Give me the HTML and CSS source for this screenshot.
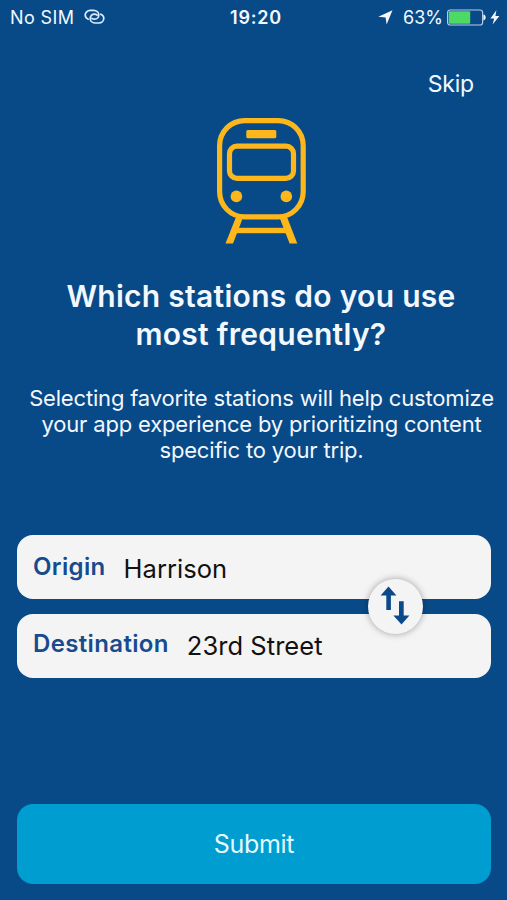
FILE: index.html
```html
<!DOCTYPE html>
<html lang="en">
<head>
  <meta charset="UTF-8" />
  <meta name="viewport" content="width=device-width, initial-scale=1.0" />
  <title>Favorite Stations</title>
  <link rel="stylesheet" href="styles.css">
</head>
<body>
  <div class="status-bar">
    <div class="status-left">
      <span class="carrier">No SIM</span>
      <svg class="link-icon" width="22" height="18" viewBox="0 0 22 18">
        <path d="M4.2 11.2C2.2 10.4 1.2 8.8 1.2 7.1C1.2 4.5 3.4 2.4 6.2 2.4H9.6C12.4 2.4 14.8 4.4 14.8 7C14.8 9.4 13 11.2 10.6 11.2C9.4 11.2 8.6 10.9 7.9 10.3" />
        <path d="M16.8 6.2C18.8 7 19.8 8.6 19.8 10.3C19.8 12.9 17.6 15 14.8 15H11.4C8.6 15 6.2 13 6.2 10.4C6.2 8 8 6.2 10.4 6.2C11.6 6.2 12.4 6.5 13.1 7.1" />
      </svg>
    </div>
    <span class="time">19:20</span>
    <div class="status-right">
      <svg class="location-icon" width="15" height="15" viewBox="0 0 15 15">
        <path d="M14.5 0.3L8.6 14.4L7.6 7.5L0.3 6.7Z" />
      </svg>
      <span class="percent">63%</span>
      <svg class="battery-icon" width="40" height="17" viewBox="0 0 40 17">
        <rect class="battery-shell" x="0.6" y="1" width="35" height="15" rx="2.5" />
        <rect class="battery-level" x="1.8" y="2.2" width="21.4" height="12.6" rx="1" />
        <path class="battery-cap" d="M36.4 5.6C39.4 6 39.4 11 36.4 11.4Z" />
      </svg>
      <svg class="bolt-icon" width="10" height="15" viewBox="0 0 10 15">
        <path d="M6.4 0.3L0.4 8.5H4.2L2.6 14.6L9.4 6.1H5.4Z" />
      </svg>
    </div>
  </div>

  <header>
    <a href="#" class="skip">Skip</a>
  </header>

  <section class="intro">
    <svg class="train" width="90" height="128" viewBox="216 117 90 128">
      <rect class="line" x="219.6" y="120.6" width="83.6" height="96.2" rx="25" />
      <rect class="line" x="229.5" y="146.2" width="64" height="32.2" rx="7.5" />
      <rect x="246.3" y="130" width="30" height="8.3" rx="1.5" />
      <circle cx="236.4" cy="196.4" r="5.8" />
      <circle cx="286.3" cy="196.4" r="5.8" />
      <path d="M235.8 217.5H243L233 243.4H225.5Z" />
      <path d="M279.5 217.5H287.2L297.3 243.4H289.6Z" />
      <rect x="236" y="227.8" width="51" height="5.4" />
    </svg>
    <h1>Which stations do you use<br>most frequently?</h1>
    <p>Selecting favorite stations will help customize<br>your app experience by prioritizing content<br>specific to your trip.</p>
  </section>

  <section class="stations">
    <div class="field">
      <span class="label">Origin</span>
      <span class="value">Harrison</span>
    </div>
    <div class="field destination">
      <span class="label">Destination</span>
      <span class="value">23rd Street</span>
    </div>
    <button class="swap" aria-label="Swap stations">
      <svg width="30" height="40" viewBox="0 0 30 40">
        <path d="M8.5 0.6L16.4 9.6H10.9V24H6.3V9.6H0.6Z" />
        <path d="M21.5 38.6L13.4 29.6H19V15.2H23.7V29.6H29.4Z" />
      </svg>
    </button>
  </section>

  <button class="submit">Submit</button>
</body>
</html>
```
FILE: styles.css
```css
:root {
  --blue: #084a88;
  --yellow: #fdb71a;
  --cyan: #009dd0;
  --field: #f4f4f4;
  --text: #f3f8ff;
}

* {
  margin: 0;
  padding: 0;
  box-sizing: border-box;
}

body {
  width: 507px;
  height: 900px;
  font-family: Inter, "Liberation Sans", sans-serif;
  background: var(--blue);
  color: var(--text);
  display: flex;
  flex-direction: column;
  overflow: hidden;
}

button {
  border: none;
  font-family: inherit;
  cursor: pointer;
}

.status-bar {
  height: 36px;
  padding: 0 7px 2px 10px;
  display: grid;
  grid-template-columns: 1fr auto 1fr;
  align-items: center;
  font-size: 18px;
}

.status-left,
.status-right {
  display: flex;
  align-items: center;
}

.status-left {
  gap: 10px;
}

.carrier {
  letter-spacing: 0.4px;
}

.status-right {
  justify-content: flex-end;
}

.time {
  padding-left: 2px;
  font-weight: 600;
  letter-spacing: 0.8px;
}

.link-icon {
  fill: none;
  stroke: #dcecff;
  stroke-width: 1.7;
  stroke-linecap: round;
}

.location-icon,
.bolt-icon {
  fill: var(--text);
}

.percent {
  margin: 0 4px 0 10px;
}

.battery-shell {
  fill: none;
  stroke: #b9c9e6;
  stroke-width: 1.2;
}

.battery-level {
  fill: #4cd964;
}

.battery-cap {
  fill: var(--text);
}

.bolt-icon {
  margin-left: 3px;
}

header {
  height: 81px;
  padding: 33px 33px 0 0;
  text-align: right;
}

.skip {
  color: var(--text);
  font-size: 23px;
  letter-spacing: -0.2px;
  line-height: 30px;
  text-decoration: none;
}

.intro {
  padding: 0 0 0 15px;
  height: 418px;
  display: flex;
  flex-direction: column;
  align-items: center;
  text-align: center;
}

.train {
  margin-right: 1px;
  fill: var(--yellow);
}

.train .line {
  fill: none;
  stroke: var(--yellow);
  stroke-width: 5.2;
}

h1 {
  margin-top: 33px;
  font-size: 30px;
  font-weight: 600;
  letter-spacing: 0.28px;
  line-height: 37.5px;
}

.intro p {
  margin-top: 32px;
  padding-left: 1px;
  font-size: 22px;
  letter-spacing: -0.18px;
  line-height: 26px;
  white-space: nowrap;
}

.stations {
  position: relative;
  margin: 0 16px 0 17px;
  display: flex;
  flex-direction: column;
  gap: 15px;
}

.field {
  height: 64px;
  padding: 0 16px;
  display: flex;
  align-items: center;
  gap: 18px;
  background: var(--field);
  border-radius: 16px;
}

.destination {
  padding-bottom: 4px;
}

.label {
  padding-bottom: 2px;
  color: #174b8e;
  font-size: 24px;
  font-weight: 600;
  letter-spacing: 0.35px;
}

.value {
  padding-top: 3px;
  color: #111;
  font-size: 25.5px;
  letter-spacing: 0.05px;
}

/* sits over the gap between the two fields */
.swap {
  position: absolute;
  top: 44px;
  right: 68.5px;
  width: 55px;
  height: 55px;
  padding-bottom: 2px;
  display: flex;
  align-items: center;
  justify-content: center;
  background: var(--field);
  border-radius: 50%;
  box-shadow: 0 0 7px rgba(0, 0, 0, 0.35);
}

.swap svg {
  fill: #0b4a8a;
}

.submit {
  margin: auto 16px 16px 17px;
  height: 80px;
  background: var(--cyan);
  color: #e6fbff;
  font-size: 25px;
  letter-spacing: -0.3px;
  border-radius: 16px;
}
```
